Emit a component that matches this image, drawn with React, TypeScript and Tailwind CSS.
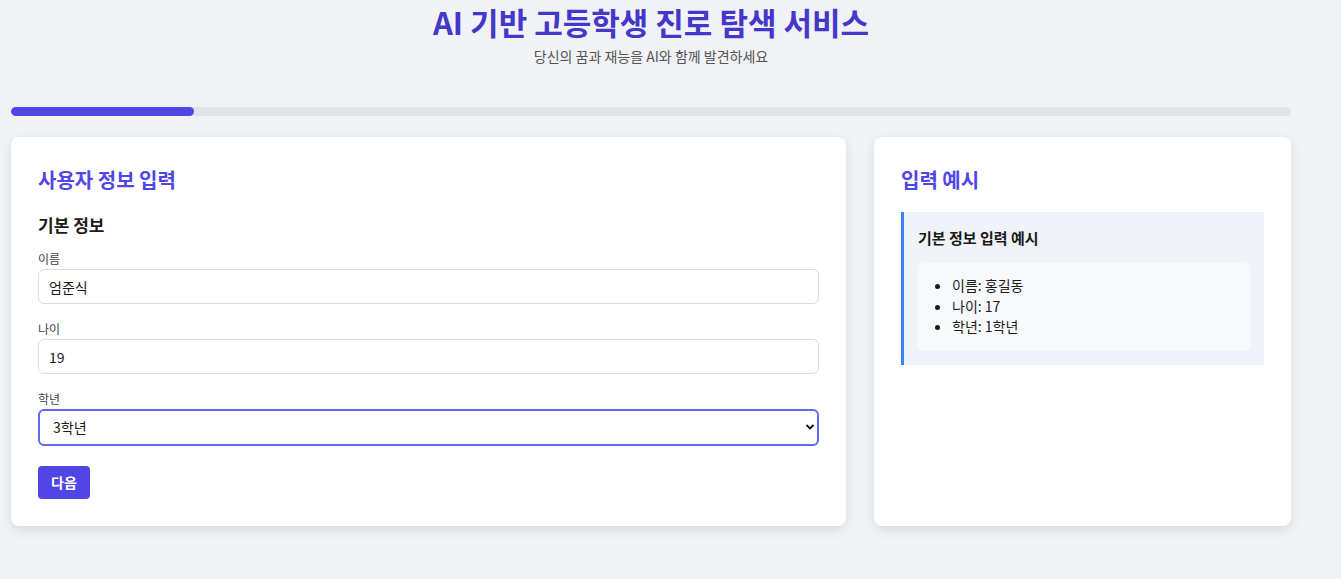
export default function App() {
  const font = { fontFamily: '"Noto Sans CJK KR", "Noto Sans", sans-serif' };
  return (
    <div className="min-h-[579px] w-full bg-[#f0f2f5] text-[#1a1a1a]" style={font}>
      <div className="w-[1280px] ml-[11px] pt-[2px]">
        <header className="text-center">
          <h1 className="text-[31px] leading-[40px] font-bold text-[#4338ca]">AI 기반 고등학생 진로 탐색 서비스</h1>
          <p className="mt-[4px] text-[14px] leading-[20px] text-[#555]">당신의 꿈과 재능을 AI와 함께 발견하세요</p>
        </header>

        <div className="mt-[41px] h-[9px] w-full rounded-full bg-[#e2e4e9] overflow-hidden">
          <div className="h-full w-[183px] rounded-full bg-[#4f46e5]" />
        </div>

        <div className="mt-[21px] grid grid-cols-[835px_1fr] gap-[28px]">
          <section className="h-[389px] rounded-lg bg-white px-[27px] pt-[28px] shadow-[0_4px_12px_rgba(0,0,0,0.1)]">
            <h2 className="text-[20px] leading-[30px] font-bold text-[#4f46e5]">사용자 정보 입력</h2>
            <h3 className="mt-[17px] text-[17px] leading-[26px] font-bold">기본 정보</h3>

            <div className="mt-[12px]">
              <label className="block text-[12px] leading-[18px] text-[#444]">이름</label>
              <input
                defaultValue="엄준식"
                className="mt-[1px] block h-[35px] w-[781px] rounded-[6px] border border-[#dcdcdc] px-[10px] text-[14px] text-[#1a1a1a] outline-none"
              />
            </div>

            <div className="mt-[16px]">
              <label className="block text-[12px] leading-[18px] text-[#444]">나이</label>
              <input
                defaultValue="19"
                className="mt-[1px] block h-[35px] w-[781px] rounded-[6px] border border-[#dcdcdc] px-[10px] text-[14px] text-[#1a1a1a] outline-none"
              />
            </div>

            <div className="mt-[16px]">
              <label className="block text-[12px] leading-[18px] text-[#444]">학년</label>
              <div className="relative mt-[1px] w-[781px]">
                <select
                  defaultValue="3학년"
                  className="block h-[37px] w-full appearance-none rounded-[6px] border-2 border-[#6366f1] bg-white px-[13px] text-[14px] text-[#1a1a1a] outline-none"
                >
                  <option>1학년</option>
                  <option>2학년</option>
                  <option>3학년</option>
                </select>
                <svg className="pointer-events-none absolute right-[3px] top-[14px]" width="12" height="8" viewBox="0 0 12 8">
                  <path d="M2.5 2 L6 5.5 L9.5 2" fill="none" stroke="#111" strokeWidth="1.8" />
                </svg>
              </div>
            </div>

            <button className="mt-[20px] h-[33px] w-[52px] rounded-[4px] bg-[#4f46e5] text-[14px] font-bold text-white">
              다음
            </button>
          </section>

          <section className="h-[389px] rounded-lg bg-white px-[27px] pt-[28px] shadow-[0_4px_12px_rgba(0,0,0,0.1)]">
            <h2 className="text-[20px] leading-[30px] font-bold text-[#4f46e5]">입력 예시</h2>
            <div className="mt-[17px] border-l-[3px] border-[#3b82f6] bg-[#eff2f6] pl-[14px] pr-[14px] pt-[15px] pb-[14px]">
              <h4 className="text-[15px] leading-[22px] font-bold">기본 정보 입력 예시</h4>
              <div className="mt-[14px] rounded-[6px] bg-[#f8f9fa] pt-[12px] pb-[14px] pl-[34px]">
                <ul className="list-disc text-[14px] leading-[20.5px]">
                  <li>이름: 홍길동</li>
                  <li>나이: 17</li>
                  <li>학년: 1학년</li>
                </ul>
              </div>
            </div>
          </section>
        </div>
      </div>
    </div>
  );
}
